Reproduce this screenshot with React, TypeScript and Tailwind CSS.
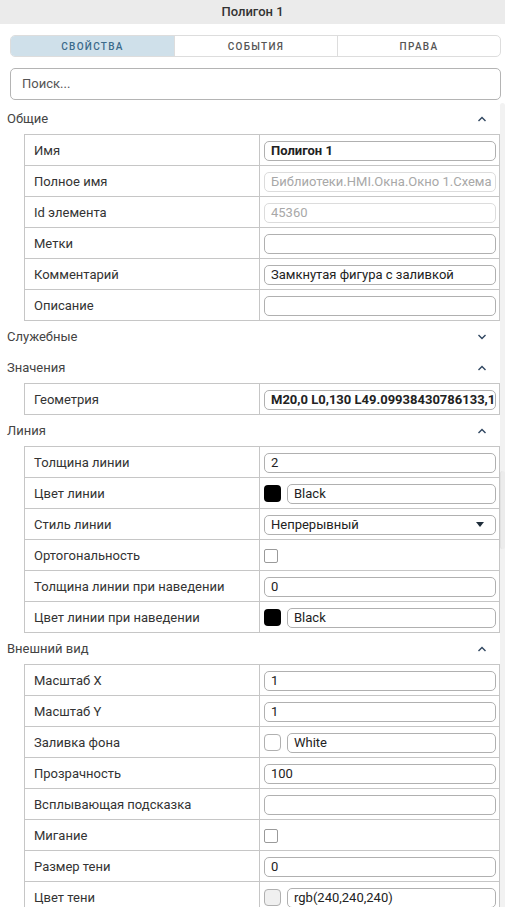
import type { ReactNode } from "react";

type Field =
  | { kind: "text"; value?: string; bold?: boolean; disabled?: boolean }
  | { kind: "color"; swatch: string; value: string; swatchBorder?: boolean }
  | { kind: "select"; value: string }
  | { kind: "check" };

type Row = { label: string; field: Field };

type Section = { title: string; open: boolean; rows: Row[] };

const SECTIONS: Section[] = [
  {
    title: "Общие",
    open: true,
    rows: [
      { label: "Имя", field: { kind: "text", value: "Полигон 1", bold: true } },
      {
        label: "Полное имя",
        field: { kind: "text", value: "Библиотеки.HMI.Окна.Окно 1.Схема", disabled: true },
      },
      { label: "Id элемента", field: { kind: "text", value: "45360", disabled: true } },
      { label: "Метки", field: { kind: "text" } },
      { label: "Комментарий", field: { kind: "text", value: "Замкнутая фигура с заливкой" } },
      { label: "Описание", field: { kind: "text" } },
    ],
  },
  { title: "Служебные", open: false, rows: [] },
  {
    title: "Значения",
    open: true,
    rows: [
      {
        label: "Геометрия",
        field: { kind: "text", value: "M20,0 L0,130 L49.09938430786133,130 Z", bold: true },
      },
    ],
  },
  {
    title: "Линия",
    open: true,
    rows: [
      { label: "Толщина линии", field: { kind: "text", value: "2" } },
      { label: "Цвет линии", field: { kind: "color", swatch: "#000000", value: "Black" } },
      { label: "Стиль линии", field: { kind: "select", value: "Непрерывный" } },
      { label: "Ортогональность", field: { kind: "check" } },
      { label: "Толщина линии при наведении", field: { kind: "text", value: "0" } },
      {
        label: "Цвет линии при наведении",
        field: { kind: "color", swatch: "#000000", value: "Black" },
      },
    ],
  },
  {
    title: "Внешний вид",
    open: true,
    rows: [
      { label: "Масштаб X", field: { kind: "text", value: "1" } },
      { label: "Масштаб Y", field: { kind: "text", value: "1" } },
      {
        label: "Заливка фона",
        field: { kind: "color", swatch: "#ffffff", value: "White", swatchBorder: true },
      },
      { label: "Прозрачность", field: { kind: "text", value: "100" } },
      { label: "Всплывающая подсказка", field: { kind: "text" } },
      { label: "Мигание", field: { kind: "check" } },
      { label: "Размер тени", field: { kind: "text", value: "0" } },
      {
        label: "Цвет тени",
        field: { kind: "color", swatch: "#f0f0f0", value: "rgb(240,240,240)", swatchBorder: true },
      },
    ],
  },
];

const TABS = ["Свойства", "События", "Права"];

function Chevron({ up }: { up: boolean }) {
  return (
    <svg width="10" height="6" viewBox="0 0 10 6" className="text-[#2f4660]">
      <polyline
        points={up ? "1.5,5 5,1.5 8.5,5" : "1.5,1 5,4.5 8.5,1"}
        fill="none"
        stroke="currentColor"
        strokeWidth="1.4"
      />
    </svg>
  );
}

function Box({ children, className = "" }: { children?: ReactNode; className?: string }) {
  return (
    <div
      className={`flex h-[20px] min-w-0 flex-1 items-center overflow-hidden whitespace-nowrap rounded-[5px] border pl-[6px] text-[13px] ${className}`}
    >
      {children}
    </div>
  );
}

function FieldCell({ field }: { field: Field }) {
  switch (field.kind) {
    case "text":
      return (
        <Box
          className={
            field.disabled
              ? "border-[#dcdcdc] text-[#a8a8a8]"
              : `border-[#b0b0b0] text-[#222] ${field.bold ? "font-bold" : ""}`
          }
        >
          {field.value}
        </Box>
      );
    case "color":
      return (
        <div className="flex min-w-0 flex-1 items-center gap-[6px]">
          <div
            className={`h-[17px] w-[17px] shrink-0 rounded-[4px] ${
              field.swatchBorder ? "border border-[#b0b0b0]" : ""
            }`}
            style={{ backgroundColor: field.swatch }}
          />
          <Box className="border-[#b0b0b0] text-[#222]">{field.value}</Box>
        </div>
      );
    case "select":
      return (
        <Box className="justify-between border-[#b0b0b0] pr-[11px] text-[#222]">
          <span>{field.value}</span>
          <svg width="8" height="5" viewBox="0 0 8 5">
            <polygon points="0,0 8,0 4,5" fill="#1f2d3a" />
          </svg>
        </Box>
      );
    case "check":
      return <div className="h-[14px] w-[14px] rounded-[2px] border border-[#9a9a9a] bg-white" />;
  }
}

function SectionBlock({ section }: { section: Section }) {
  return (
    <div>
      <div className="flex h-[31px] items-center justify-between pl-[7px] pr-[13px] text-[13px] text-[#444]">
        <span>{section.title}</span>
        <Chevron up={section.open} />
      </div>
      {section.open && section.rows.length > 0 && (
        <div className="ml-[24px] grid grid-cols-[235px_1fr] border-l border-t border-[#c6c6c6]">
          {section.rows.map((row) => (
            <div key={row.label} className="contents">
              <div className="flex h-[31px] items-center border-b border-r border-[#c6c6c6] pl-[9px] pt-[2px] text-[13px] text-[#333]">
                {row.label}
              </div>
              <div className="flex h-[31px] min-w-0 items-center border-b border-r border-[#c6c6c6] pl-[4px] pr-[3px] pt-[1px]">
                <FieldCell field={row.field} />
              </div>
            </div>
          ))}
        </div>
      )}
    </div>
  );
}

export default function App() {
  return (
    <div className="flex h-[907px] w-[505px] flex-col overflow-hidden bg-white font-['Roboto',sans-serif]">
      <div className="flex h-[24px] shrink-0 items-center justify-center bg-[#ebebeb] text-[13px] font-medium text-[#333]">
        Полигон 1
      </div>

      <div className="ml-[10px] mr-[4px] mt-[11px] grid h-[22px] grid-cols-3 overflow-hidden rounded-[5px] border border-[#dddddd]">
        {TABS.map((tab, i) => (
          <div
            key={tab}
            className={`flex items-center justify-center text-[10px] font-medium uppercase tracking-[0.13em] ${
              i === 0 ? "bg-[#cfe0ea] text-[#3b6a8a]" : "border-l border-[#dddddd] text-[#555]"
            }`}
          >
            {tab}
          </div>
        ))}
      </div>

      <div className="ml-[10px] mr-[4px] mt-[11px] flex h-[32px] items-center rounded-[5px] border border-[#b4b4b4] pl-[11px] text-[13px] text-[#555]">
        Поиск...
      </div>

      <div className="mt-[3px] flex min-h-0 flex-1">
        <div className="min-w-0 flex-1">
          {SECTIONS.map((s) => (
            <SectionBlock key={s.title} section={s} />
          ))}
        </div>
        <div className="flex w-[5px] shrink-0 flex-col rounded-t-[3px] bg-[#f2f2f2]">
          <div className="h-[368px]" />
          <div className="h-[78px] rounded-[3px] border-l border-[#e2e2e2] bg-[#ececec]" />
        </div>
      </div>
    </div>
  );
}
